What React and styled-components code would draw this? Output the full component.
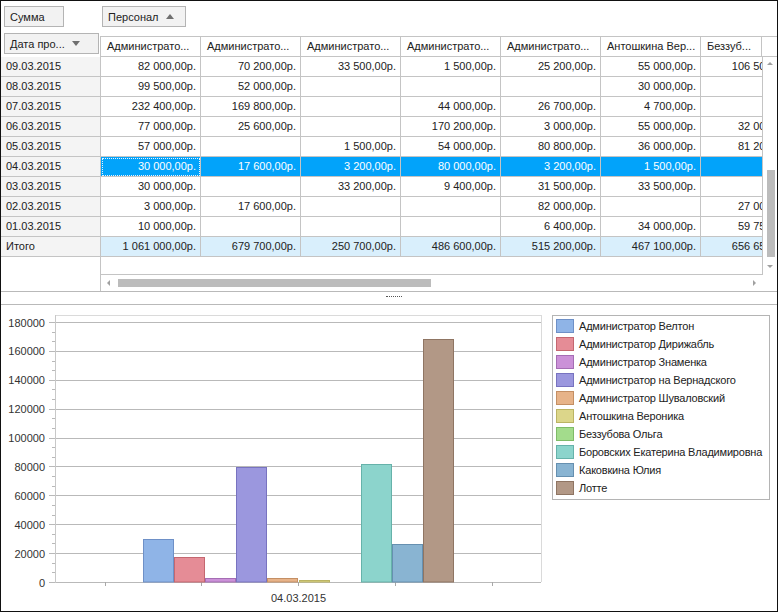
import React from "react";
import styled, { createGlobalStyle } from "styled-components";

const GlobalStyle = createGlobalStyle`
  html, body {
    margin: 0;
    padding: 0;
    background: #fff;
  }
  body {
    font-family: "Liberation Sans", Arial, sans-serif;
    font-size: 11px;
    color: #222;
  }
  * {
    box-sizing: border-box;
  }
`;

const LINE = "#c4c4c4";

const COLUMNS = [
  "Администрато...",
  "Администрато...",
  "Администрато...",
  "Администрато...",
  "Администрато...",
  "Антошкина Вер...",
];

const ROWS = [
  ["09.03.2015", "82 000,00р.", "70 200,00р.", "33 500,00р.", "1 500,00р.", "25 200,00р.", "55 000,00р.", "106 500,00р."],
  ["08.03.2015", "99 500,00р.", "52 000,00р.", "", "", "", "30 000,00р.", ""],
  ["07.03.2015", "232 400,00р.", "169 800,00р.", "", "44 000,00р.", "26 700,00р.", "4 700,00р.", ""],
  ["06.03.2015", "77 000,00р.", "25 600,00р.", "", "170 200,00р.", "3 000,00р.", "55 000,00р.", "32 000,00р."],
  ["05.03.2015", "57 000,00р.", "", "1 500,00р.", "54 000,00р.", "80 800,00р.", "36 000,00р.", "81 200,00р."],
  ["04.03.2015", "30 000,00р.", "17 600,00р.", "3 200,00р.", "80 000,00р.", "3 200,00р.", "1 500,00р.", ""],
  ["03.03.2015", "30 000,00р.", "", "33 200,00р.", "9 400,00р.", "31 500,00р.", "33 500,00р.", ""],
  ["02.03.2015", "3 000,00р.", "17 600,00р.", "", "", "82 000,00р.", "", "27 000,00р."],
  ["01.03.2015", "10 000,00р.", "", "", "", "6 400,00р.", "34 000,00р.", "59 750,00р."],
  ["Итого", "1 061 000,00р.", "679 700,00р.", "250 700,00р.", "486 600,00р.", "515 200,00р.", "467 100,00р.", "656 650,00р."],
];

const SELECTED = 5;
const TOTAL = 9;

const SERIES = [
  { name: "Администратор Велтон", fill: "#8fb4e7", stroke: "#6e90c7", value: 30000 },
  { name: "Администратор Дирижабль", fill: "#e58c96", stroke: "#c46770", value: 17600 },
  { name: "Администратор Знаменка", fill: "#cb91d8", stroke: "#a56db4", value: 3200 },
  { name: "Администратор на Вернадского", fill: "#9b97de", stroke: "#7873c0", value: 80000 },
  { name: "Администратор Шуваловский", fill: "#e7b389", stroke: "#c48f64", value: 3200 },
  { name: "Антошкина Вероника", fill: "#dcd68a", stroke: "#bbb463", value: 1500 },
  { name: "Беззубова Ольга", fill: "#a3dc8c", stroke: "#7fbb68", value: 0 },
  { name: "Боровских Екатерина Владимировна", fill: "#8cd4cc", stroke: "#66b2aa", value: 82000 },
  { name: "Каковкина Юлия", fill: "#89b4d2", stroke: "#6690b0", value: 27000 },
  { name: "Лотте", fill: "#b29886", stroke: "#8f7563", value: 168500 },
];

const Window = styled.div`
  width: 778px;
  height: 612px;
  border: 1px solid #111;
  display: flex;
  flex-direction: column;
  background: #fff;
  overflow: hidden;
`;

const TopPanel = styled.div`
  flex: none;
  height: 291px;
  border-bottom: 1px solid #b9b9b9;
  display: flex;
  flex-direction: column;
`;

const FilterBar = styled.div`
  height: 32px;
  flex: none;
  display: flex;
  align-items: flex-start;
  padding: 5px 0 0 3px;
`;

const FieldButton = styled.div`
  width: ${(p) => p.$w}px;
  margin-left: ${(p) => p.$ml || 0}px;
  height: 21px;
  flex: none;
  border: 1px solid #b4b4b4;
  background: #f2f2f2;
  display: flex;
  align-items: center;
  gap: 7px;
  padding: 0 5px;
  color: #222;
  white-space: nowrap;
`;

const Arrow = ({ down }) => (
  <svg width="8" height="5" viewBox="0 0 8 5">
    <path d={down ? "M0 0h8L4 5z" : "M0 5h8L4 0z"} fill="#6f6f6f" />
  </svg>
);

const HeaderRow = styled.div`
  height: 24px;
  flex: none;
  display: flex;
  align-items: flex-end;
`;

const Corner = styled.div`
  width: 99px;
  height: 24px;
  padding-left: 3px;
  flex: none;
`;

const HeaderClip = styled.div`
  width: 662px;
  height: 21px;
  flex: none;
  display: flex;
  overflow: hidden;
  border: 1px solid ${LINE};
  border-right: none;
`;

const HeaderCell = styled.div`
  width: ${(p) => p.$w || 100}px;
  flex: none;
  border-right: 1px solid ${LINE};
  padding-left: 6px;
  line-height: 19px;
  white-space: nowrap;
  overflow: hidden;
  background: #fff;
`;

const HeaderFiller = styled.div`
  width: 15px;
  height: 21px;
  flex: none;
  border-top: 1px solid ${LINE};
  border-bottom: 1px solid ${LINE};
`;

const Body = styled.div`
  flex: 1;
  display: flex;
  min-height: 0;
`;

const RowHeads = styled.div`
  width: 100px;
  flex: none;
  border-right: 1px solid ${LINE};
`;

const RowHead = styled.div`
  height: 20px;
  border-bottom: 1px solid ${LINE};
  background: #f4f4f4;
  padding-left: 5px;
  line-height: 19px;
  white-space: nowrap;
`;

const Middle = styled.div`
  width: 662px;
  flex: none;
  display: flex;
  flex-direction: column;
`;

const DataArea = styled.div`
  height: 217px;
  flex: none;
  border-right: 1px solid ${LINE};
  overflow: hidden;
`;

const DataRow = styled.div`
  width: 700px;
  height: 20px;
  display: flex;
  background: ${(p) => (p.$selected ? "#02a3fa" : p.$total ? "#d9effc" : "#fff")};
  color: ${(p) => (p.$selected ? "#fff" : "#222")};
`;

const Cell = styled.div`
  width: 100px;
  flex: none;
  border-right: 1px solid ${LINE};
  border-bottom: 1px solid ${LINE};
  text-align: right;
  padding-right: 4px;
  line-height: 19px;
  white-space: nowrap;
  ${(p) => p.$focus && `outline: 1px dotted #e6f4ff; outline-offset: -2px;`}
`;

const HScroll = styled.div`
  height: 17px;
  flex: none;
  border-top: 1px solid ${LINE};
  display: flex;
  align-items: center;
`;

const ScrollArrow = styled.div`
  width: ${(p) => (p.$vertical ? 14 : 16)}px;
  height: ${(p) => (p.$vertical ? 14 : 16)}px;
  flex: none;
  display: flex;
  align-items: center;
  justify-content: center;
`;

const HThumb = styled.div`
  width: 313px;
  height: 8px;
  margin-left: 1px;
  background: #bcbcbc;
`;

const Spacer = styled.div`
  flex: 1;
`;

const VScroll = styled.div`
  width: 14px;
  height: 217px;
  flex: none;
  display: flex;
  flex-direction: column;
`;

const VThumb = styled.div`
  width: 8px;
  height: 87px;
  margin: 99px 0 0 4px;
  background: #bcbcbc;
`;

const Splitter = styled.div`
  height: 13px;
  flex: none;
  border-bottom: 1px solid #b9b9b9;
  display: flex;
  justify-content: center;
  padding-top: 4px;
`;

const Grip = styled.div`
  width: 16px;
  height: 1px;
  margin-left: 10px;
  border-top: 1px dotted #555;
`;

const ChartPanel = styled.div`
  flex: 1;
  display: flex;
  align-items: flex-start;
`;

const Legend = styled.div`
  width: 218px;
  margin: 10px 0 0 7px;
  border: 1px solid #b4b4b4;
  padding: 1px 3px 2px 3px;
`;

const LegendItem = styled.div`
  height: 18px;
  display: flex;
  align-items: center;
  gap: 5px;
  white-space: nowrap;
  letter-spacing: -0.2px;
  color: #222;
`;

const Swatch = styled.div`
  width: 18px;
  height: 14px;
  flex: none;
  background: ${(p) => p.$fill};
  border: 1px solid ${(p) => p.$stroke};
`;

const Tri = ({ dir }) => {
  const d = {
    up: "M0 4h6L3 1z",
    down: "M0 1h6L3 4z",
    left: "M4 0v6L1 3z",
    right: "M1 0v6L4 3z",
  }[dir];
  return (
    <svg width="6" height="6" viewBox="0 0 6 6">
      <path d={d} fill="#a0a0a0" />
    </svg>
  );
};

const Y0 = 582.5;
const K = 260 / 180000;
const yOf = (v) => Y0 - v * K;
const px = (v) => Math.floor(v) + 0.5;

function Chart() {
  const majors = [];
  for (let v = 0; v <= 180000; v += 20000) majors.push(v);
  const minors = [];
  for (let v = 0; v < 180000; v += 20000) minors.push(v + 20000 / 3, v + 40000 / 3);

  return (
    <svg width="544" height="306" viewBox="1 305 544 306" style={{ flex: "none" }}>
      <line x1="55" y1="315.5" x2="542" y2="315.5" stroke="#dadada" />
      <line x1="541.5" y1="315" x2="541.5" y2="582" stroke="#dadada" />
      {majors.map((v) => (
        <g key={v}>
          <line x1="49" y1={px(yOf(v))} x2="541" y2={px(yOf(v))} stroke="#b9b9b9" />
          <text
            x="45"
            y={yOf(v) + 4}
            textAnchor="end"
            fontSize="11"
            fontFamily="Liberation Sans, Arial, sans-serif"
            fill="#333"
          >
            {v}
          </text>
        </g>
      ))}
      {minors.map((v) => (
        <line key={v} x1="52" y1={px(yOf(v))} x2="55" y2={px(yOf(v))} stroke="#b9b9b9" />
      ))}
      <line x1="55.5" y1="315" x2="55.5" y2="583" stroke="#c8c8c8" />
      {[105, 201, 298, 395, 492].map((x) => (
        <line key={x} x1={x + 0.5} y1="582" x2={x + 0.5} y2="586" stroke="#a8a8a8" />
      ))}
      {SERIES.map((s, i) => {
        if (!s.value) return null;
        const x = Math.round(143 + i * 31.1) + 0.5;
        const y = Math.round(yOf(s.value)) + 0.5;
        return (
          <rect key={s.name} x={x} y={y} width="30" height={582 - y} fill={s.fill} stroke={s.stroke} />
        );
      })}
      <text
        x="298.5"
        y="602"
        textAnchor="middle"
        fontSize="11"
        fontFamily="Liberation Sans, Arial, sans-serif"
        fill="#333"
      >
        04.03.2015
      </text>
    </svg>
  );
}

export default function App() {
  return (
    <>
      <GlobalStyle />
      <Window>
        <TopPanel>
          <FilterBar>
            <FieldButton $w={60}>Сумма</FieldButton>
            <FieldButton $w={84} $ml={38}>
              Персонал <Arrow />
            </FieldButton>
          </FilterBar>
          <HeaderRow>
            <Corner>
              <FieldButton $w={95}>
                Дата про... <Arrow down />
              </FieldButton>
            </Corner>
            <HeaderClip>
              {COLUMNS.map((c, i) => (
                <HeaderCell key={i}>{c}</HeaderCell>
              ))}
              <HeaderCell $w={61}>Беззуб...</HeaderCell>
            </HeaderClip>
            <HeaderFiller />
          </HeaderRow>
          <Body>
            <RowHeads>
              {ROWS.map((r) => (
                <RowHead key={r[0]}>{r[0]}</RowHead>
              ))}
            </RowHeads>
            <Middle>
              <DataArea>
                {ROWS.map((r, ri) => (
                  <DataRow key={r[0]} $selected={ri === SELECTED} $total={ri === TOTAL}>
                    {r.slice(1).map((v, ci) => (
                      <Cell key={ci} $focus={ri === SELECTED && ci === 0}>
                        {v.replace(/ /g, "\u00a0")}
                      </Cell>
                    ))}
                  </DataRow>
                ))}
              </DataArea>
              <HScroll>
                <ScrollArrow>
                  <Tri dir="left" />
                </ScrollArrow>
                <HThumb />
                <Spacer />
                <ScrollArrow>
                  <Tri dir="right" />
                </ScrollArrow>
              </HScroll>
            </Middle>
            <VScroll>
              <ScrollArrow $vertical>
                <Tri dir="up" />
              </ScrollArrow>
              <VThumb />
              <Spacer />
              <ScrollArrow $vertical>
                <Tri dir="down" />
              </ScrollArrow>
            </VScroll>
          </Body>
        </TopPanel>
        <Splitter>
          <Grip />
        </Splitter>
        <ChartPanel>
          <Chart />
          <Legend>
            {SERIES.map((s) => (
              <LegendItem key={s.name}>
                <Swatch $fill={s.fill} $stroke={s.stroke} />
                {s.name}
              </LegendItem>
            ))}
          </Legend>
        </ChartPanel>
      </Window>
    </>
  );
}
